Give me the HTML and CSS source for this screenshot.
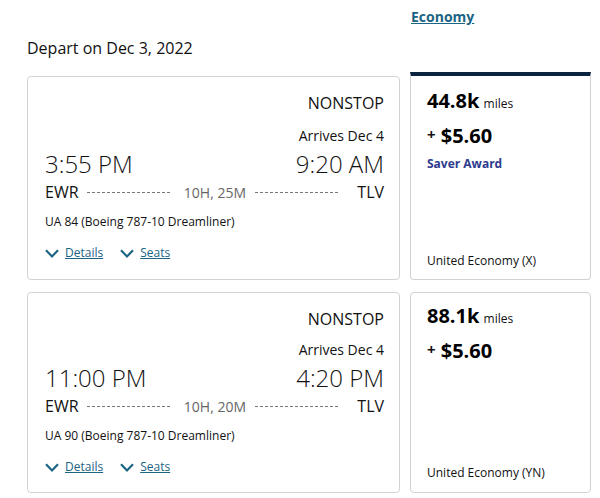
FILE: index.html
```html
<!DOCTYPE html>
<html lang="en">
<head>
<meta charset="utf-8">
<title>Flights</title>
<link rel="stylesheet" href="styles.css">
</head>
<body>
<div class="page">
  <div class="grid">
    <h1 class="title">Depart on Dec 3, 2022</h1>
    <div class="col-head"><a class="col-link" href="#">Economy</a></div>

    <div class="flight first">
      <div class="stops">NONSTOP</div>
      <div class="arrives">Arrives Dec 4</div>
      <div class="times"><span>3:55 PM</span><span>9:20 AM</span></div>
      <div class="route">
        <span class="code">EWR</span>
        <span class="dash"></span>
        <span class="dur">10H, 25M</span>
        <span class="dash"></span>
        <span class="code">TLV</span>
      </div>
      <div class="equip">UA 84 (Boeing 787-10 Dreamliner)</div>
      <div class="links">
        <a class="more" href="#"><svg class="chev" viewBox="0 0 14 9" width="14" height="9"><path d="M1 1.2 L7 7.4 L13 1.2" fill="none" stroke="currentColor" stroke-width="2.2"/></svg><span>Details</span></a>
        <a class="more" href="#"><svg class="chev" viewBox="0 0 14 9" width="14" height="9"><path d="M1 1.2 L7 7.4 L13 1.2" fill="none" stroke="currentColor" stroke-width="2.2"/></svg><span>Seats</span></a>
      </div>
    </div>
    <div class="price selected">
      <div class="miles"><b>44.8k</b> <span>miles</span></div>
      <div class="cash"><span class="plus">+</span> <b>$5.60</b></div>
      <div class="award">Saver Award</div>
      <div class="cabin">United Economy (X)</div>
    </div>

    <div class="flight second">
      <div class="stops">NONSTOP</div>
      <div class="arrives">Arrives Dec 4</div>
      <div class="times"><span>11:00 PM</span><span>4:20 PM</span></div>
      <div class="route">
        <span class="code">EWR</span>
        <span class="dash"></span>
        <span class="dur">10H, 20M</span>
        <span class="dash"></span>
        <span class="code">TLV</span>
      </div>
      <div class="equip">UA 90 (Boeing 787-10 Dreamliner)</div>
      <div class="links">
        <a class="more" href="#"><svg class="chev" viewBox="0 0 14 9" width="14" height="9"><path d="M1 1.2 L7 7.4 L13 1.2" fill="none" stroke="currentColor" stroke-width="2.2"/></svg><span>Details</span></a>
        <a class="more" href="#"><svg class="chev" viewBox="0 0 14 9" width="14" height="9"><path d="M1 1.2 L7 7.4 L13 1.2" fill="none" stroke="currentColor" stroke-width="2.2"/></svg><span>Seats</span></a>
      </div>
    </div>
    <div class="price">
      <div class="miles"><b>88.1k</b> <span>miles</span></div>
      <div class="cash"><span class="plus">+</span> <b>$5.60</b></div>
      <div class="cabin">United Economy (YN)</div>
    </div>
  </div>
</div>
</body>
</html>
```
FILE: styles.css
```css
* { box-sizing: border-box; }
html, body { margin: 0; padding: 0; background: #fff; }
body {
  font-family: "Open Sans", "Liberation Sans", sans-serif;
  color: #111;
}
.page { padding-left: 27px; }
.grid {
  display: grid;
  grid-template-columns: 373px 181px;
  column-gap: 10px;
  row-gap: 12px;
}
.title {
  margin: 0;
  padding-top: 36px;
  font-size: 16px;
  line-height: 24px;
  font-weight: 400;
  color: #111;
}
.col-head { padding-top: 5px; margin-bottom: 1px; }
.col-link {
  font-size: 14px;
  font-weight: 700;
  line-height: 20px;
  color: #1b6484;
  text-decoration: underline;
  padding-left: 1px;
}
.flight {
  border: 1px solid #d2d2d2;
  border-radius: 4px;
  padding: 14px 15px 17px 17px;
}
.flight.first { margin-top: 4px; }
.stops {
  text-align: right;
  font-size: 16px;
  line-height: 24px;
}
.arrives {
  text-align: right;
  font-size: 14px;
  line-height: 20px;
  margin-top: 11px;
}
.second .arrives { margin-top: 9px; }
.second { padding-bottom: 16px; }
.times {
  display: flex;
  justify-content: space-between;
  font-size: 24px;
  font-weight: 300;
  line-height: 30px;
  margin-top: 3px;
}
.route {
  display: flex;
  align-items: center;
  font-size: 16px;
  line-height: 24px;
}
.dash {
  flex: 1;
  height: 1px;
  background: repeating-linear-gradient(to right, #777 0 3px, transparent 3px 5px);
  margin: 1px 0 0;
}
.route .dash:nth-of-type(2) { margin-left: 8px; margin-right: 12px; }
.route .dash:nth-of-type(4) { margin-left: 9px; margin-right: 17px; }
.dur {
  font-size: 14px;
  color: #666;
  padding-top: 2px;
}
.equip {
  font-size: 12px;
  line-height: 18px;
  margin-top: 8px;
}
.links {
  display: flex;
  gap: 17px;
  margin-top: 13px;
  font-size: 12px;
  line-height: 18px;
}
.more {
  display: flex;
  align-items: center;
  gap: 6px;
  color: #1b6484;
  text-decoration: none;
}
.more span { text-decoration: underline; }
.chev { display: block; margin-top: 0; }
.price {
  border: 1px solid #d2d2d2;
  border-radius: 4px;
  padding: 10px 12px 10px 16px;
  display: flex;
  flex-direction: column;
}
.price.selected {
  border-top: 4px solid #0c2340;
  border-top-left-radius: 0;
  border-top-right-radius: 0;
  padding-top: 12px;
  padding-bottom: 9px;
}
.miles { line-height: 26px; }
.miles b { font-size: 20px; font-weight: 700; color: #000; }
.miles span { font-size: 12px; }
.cash { line-height: 28px; margin-top: 5px; }
.cash .plus { font-size: 15px; font-weight: 700; position: relative; top: -3px; }
.cash b { font-size: 20px; font-weight: 700; color: #000; margin-left: 1px; }
.award {
  font-size: 12px;
  font-weight: 700;
  line-height: 18px;
  color: #2d3b8e;
  margin-top: 4px;
}
.cabin {
  margin-top: auto;
  font-size: 12px;
  line-height: 18px;
}
```
